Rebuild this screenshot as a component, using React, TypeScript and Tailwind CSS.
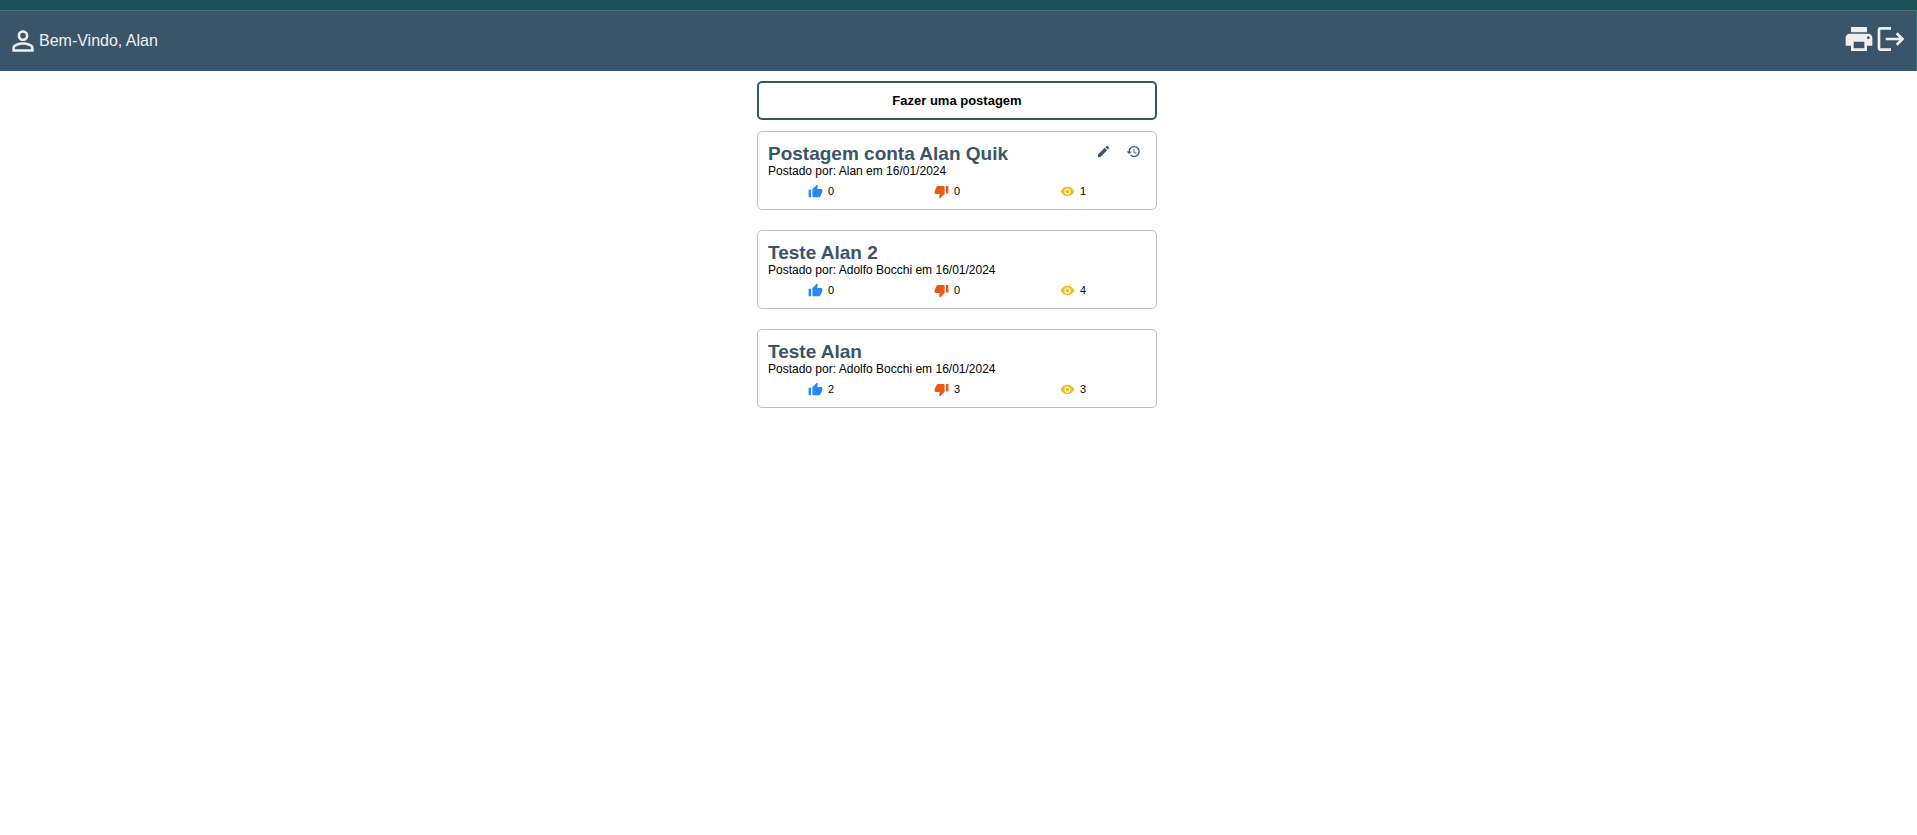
import {
  MdEdit,
  MdHistory,
  MdLogout,
  MdPersonOutline,
  MdPrint,
  MdRemoveRedEye,
  MdThumbDown,
  MdThumbUp,
} from "react-icons/md";

type Post = {
  title: string;
  author: string;
  date: string;
  likes: number;
  dislikes: number;
  views: number;
  own?: boolean;
};

const posts: Post[] = [
  { title: "Postagem conta Alan Quik", author: "Alan", date: "16/01/2024", likes: 0, dislikes: 0, views: 1, own: true },
  { title: "Teste Alan 2", author: "Adolfo Bocchi", date: "16/01/2024", likes: 0, dislikes: 0, views: 4 },
  { title: "Teste Alan", author: "Adolfo Bocchi", date: "16/01/2024", likes: 2, dislikes: 3, views: 3 },
];

function Header() {
  return (
    <header className="border-t-10 border-[#1c5156]">
      <div className="flex items-start justify-between border-t border-r border-[#3f757d] bg-[#3a546a] pt-3 pr-[9px] pb-3.5 pl-[7px] text-[#f0f0f0]">
        <div className="flex items-center pt-0.5">
          <MdPersonOutline className="size-8" />
          <span className="text-base leading-5">Bem-Vindo, Alan</span>
        </div>
        <div className="flex">
          <button type="button" aria-label="Imprimir">
            <MdPrint className="size-8" />
          </button>
          <button type="button" aria-label="Sair">
            <MdLogout className="size-8" />
          </button>
        </div>
      </div>
    </header>
  );
}

function PostCard({ post }: { post: Post }) {
  return (
    <article className="rounded-[5px] border border-[#c0c0c0] p-2.5">
      <div className="flex items-start justify-between">
        <h2 className="text-[19px] leading-[23px] font-bold text-[#3a546a]">{post.title}</h2>
        {post.own && (
          <div className="flex gap-[15px] pt-0.5 pr-[5px] text-[#3a546a]">
            <button type="button" aria-label="Editar">
              <MdEdit className="size-[15px]" />
            </button>
            <button type="button" aria-label="Histórico">
              <MdHistory className="size-[15px]" />
            </button>
          </div>
        )}
      </div>
      <p className="text-xs leading-3">
        Postado por: {post.author} em {post.date}
      </p>
      <div className="mt-1.5 grid grid-cols-3 text-[11px] leading-4">
        <button type="button" aria-label="Curtir" className="flex items-center gap-[5px] pl-10">
          <MdThumbUp className="size-[15px] text-[#2389f5]" />
          {post.likes}
        </button>
        <button type="button" aria-label="Não curtir" className="flex items-center gap-[5px] pl-10">
          <MdThumbDown className="size-[15px] text-[#e8591a]" />
          {post.dislikes}
        </button>
        <div className="flex items-center gap-[5px] pl-10">
          <MdRemoveRedEye className="size-[15px] text-[#f2bd1d]" />
          {post.views}
        </div>
      </div>
    </article>
  );
}

export default function App() {
  return (
    <div className="min-h-screen bg-white font-['Liberation_Sans',Arial,sans-serif] text-black">
      <Header />
      <div className="pt-2.5 pr-[3px]">
        <main className="mx-auto w-full max-w-[400px]">
          <button
            type="button"
            className="block w-full rounded-[5px] border-2 border-[#3a546a] py-2.5 text-[13px] leading-[15px] font-bold"
          >
            Fazer uma postagem
          </button>
          <div className="mt-[11px] flex flex-col gap-5">
            {posts.map((post) => (
              <PostCard key={post.title} post={post} />
            ))}
          </div>
        </main>
      </div>
    </div>
  );
}
